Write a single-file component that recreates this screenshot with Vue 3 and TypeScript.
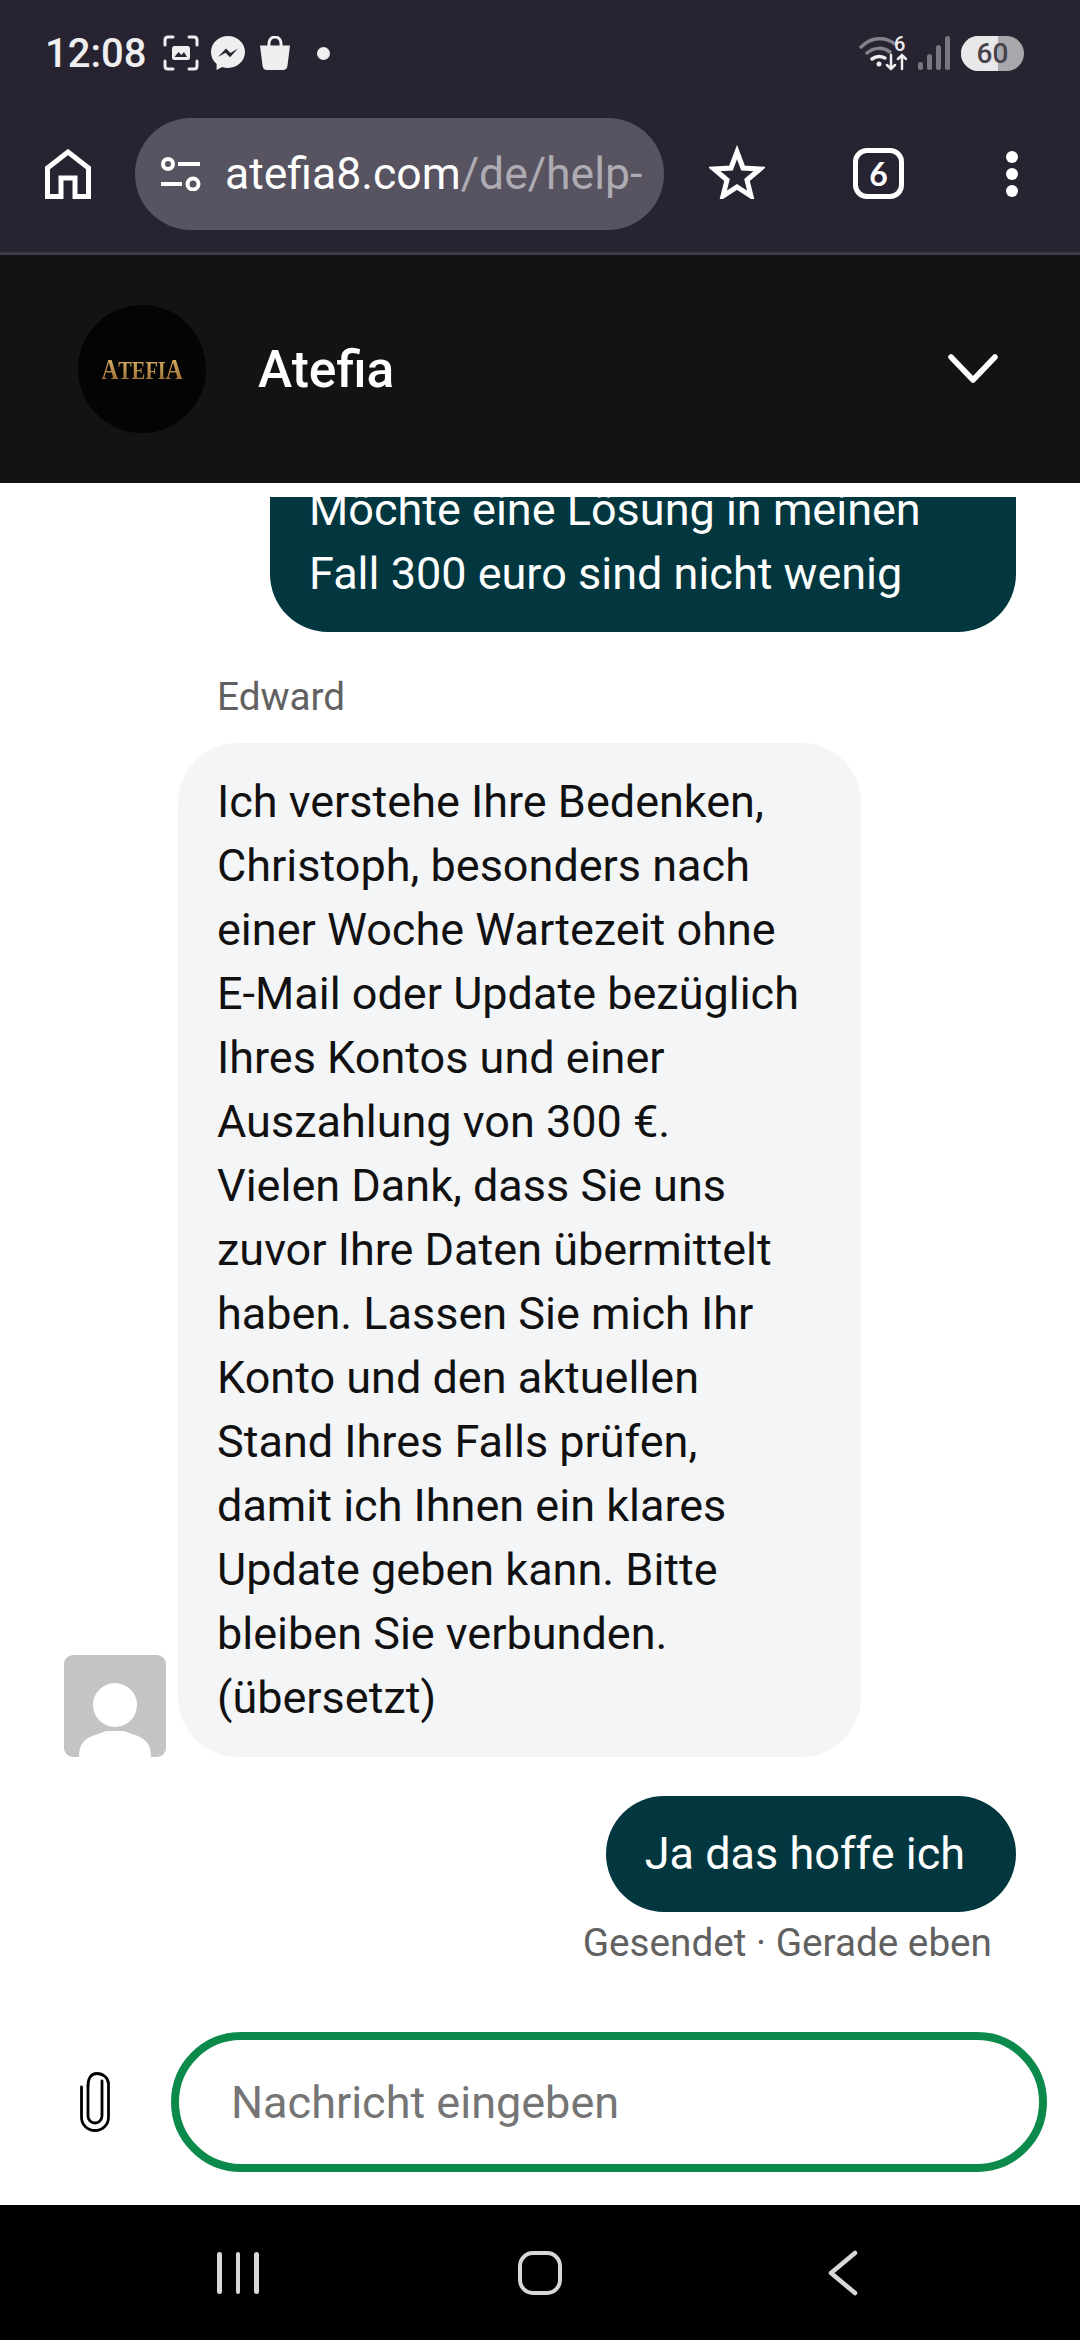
<template>
  <div class="phone">
    <div class="statusbar">
      <span class="time">12:08</span>
      <svg class="st-icon shot" viewBox="0 0 36 36" fill="none" stroke="#efeef0" stroke-width="3" stroke-linecap="round">
        <path d="M2 10V5q0-3 3-3h5M26 2h5q3 0 3 3v5M34 26v5q0 3-3 3h-5M10 34H5q-3 0-3-3v-5" />
        <rect x="9" y="11" width="18" height="14" rx="2.5" fill="#efeef0" stroke="none" />
        <path d="M11.5 22l4-5 3 3 2.5-3 3 5z" fill="#272330" stroke="none" />
      </svg>
      <svg class="st-icon messenger" viewBox="0 0 34 34">
        <path d="M17 0C7.600 0 0 7 0 16c0 5 2.100 9 5.600 12v6l5.500-3c1.800.6 3.800.9 5.900.9 9.400 0 17-7 17-15.900S26.400 0 17 0z" fill="#efeef0" />
        <path d="M7 21l8-8.500 4.400 4.400L27 12.500l-8 8.700-4.400-4.500z" fill="#272330" />
      </svg>
      <svg class="st-icon bag" viewBox="0 0 32 34">
        <path d="M10 11V7a6 6 0 0 1 12 0v4" fill="none" stroke="#efeef0" stroke-width="3" />
        <path d="M1 9.500h30l-2.500 20q-.5 4.500-4.500 4.500H8q-4 0-4.500-4.500z" fill="#efeef0" />
      </svg>
      <span class="st-dot"></span>
      <span class="spacer"></span>
      <svg class="wifi" viewBox="0 0 48 36" fill="none" stroke-linecap="round">
        <path d="M2 12C12 2 26 1 36 9" stroke="#85818b" stroke-width="3.500" />
        <path d="M8 18c7-6 16-6 23-1" stroke="#85818b" stroke-width="3.500" />
        <path d="M13 24c4-3 9-3 13-1" stroke="#efeef0" stroke-width="3.500" />
        <circle cx="20" cy="29" r="2.500" fill="#efeef0" />
        <path d="M32 20v14m-4-4 4 4 4-4M43 34V20m-4 4 4-4 4 4" stroke="#efeef0" stroke-width="2.500" />
      </svg>
      <span class="wifi-num">6</span>
      <svg class="signal" viewBox="0 0 32 34" fill="#7a7680">
        <rect x="0" y="26" width="5" height="8" rx="2.500" />
        <rect x="9" y="18" width="5" height="16" rx="2.500" />
        <rect x="18" y="9" width="5" height="25" rx="2.500" />
        <rect x="27" y="0" width="5" height="34" rx="2.500" />
      </svg>
      <span class="battery"><span class="battery-fill"></span><span class="battery-num">60</span></span>
    </div>

    <div class="toolbar">
      <svg class="home" viewBox="0 0 46 50" fill="none" stroke="#fff" stroke-width="5">
        <path d="M2.500 47.500V19L23 3l20.500 16v28.500H30V29H16v18.500z" />
      </svg>
      <div class="urlbar">
        <svg class="tune" viewBox="0 0 41 34" fill="none" stroke="#fff" stroke-width="4">
          <circle cx="8" cy="7" r="5" />
          <path d="M18 7h22M1 27h21" />
          <circle cx="33" cy="27" r="5.500" />
        </svg>
        <span class="url">atefia8.com<span class="url-path">/de/help-</span></span>
      </div>
      <svg class="star" viewBox="0 0 56 54" fill="none" stroke="#fff" stroke-width="5">
        <path d="M28 7l6 16 17 1-13 11 4 16-14-9-14 9 4-16L5 24l17-1z" />
      </svg>
      <div class="tabs">6</div>
      <div class="dots"><span></span><span></span><span></span></div>
    </div>

    <header class="chat-header">
      <div class="brand">
        <span class="brand-text"><b>A</b>TEFI<b>A</b></span>
      </div>
      <span class="chat-title">Atefia</span>
      <svg class="chevron" viewBox="0 0 50 30" fill="none" stroke="#fff" stroke-width="5.500" stroke-linecap="round" stroke-linejoin="round">
        <path d="M3 3l22 23L47 3" />
      </svg>
    </header>

    <main class="chat-wrap">
      <div class="chat">
        <div class="bubble mine first">Möchte eine Lösung in meinen<br />Fall 300 euro sind nicht wenig</div>
        <div class="agent-name">Edward</div>
        <div class="agent-row">
          <svg class="agent-avatar" viewBox="0 0 102 102">
            <rect width="102" height="102" rx="9" fill="#c4c4c4" />
            <circle cx="51" cy="50" r="22" fill="#fff" />
            <path d="M15 102c0-14 6-19 19-23l8-3h18l8 3c13 4 19 9 19 23z" fill="#fff" />
          </svg>
          <div class="bubble theirs">
            Ich verstehe Ihre Bedenken, Christoph, besonders nach einer Woche Wartezeit ohne E-Mail oder Update bezüglich Ihres Kontos und einer Auszahlung von 300 €.<br />
            Vielen Dank, dass Sie uns zuvor Ihre Daten übermittelt haben. Lassen Sie mich Ihr Konto und den aktuellen Stand Ihres Falls prüfen, damit ich Ihnen ein klares Update geben kann. Bitte bleiben Sie verbunden.<br />
            (übersetzt)
          </div>
        </div>
        <div class="bubble mine last">Ja das hoffe ich</div>
        <div class="meta">Gesendet · Gerade eben</div>
      </div>
    </main>

    <div class="composer">
      <svg class="clip" viewBox="0 0 30 60" fill="none" stroke="#000" stroke-width="2.800" stroke-linecap="round">
        <path d="M8 14v30a7 7 0 0 0 14 0V9" />
        <path d="M1.500 15v30c0 8 6 13.500 13.500 13.500S28.500 53 28.500 45V12C28.500 6 23 1.500 17 1.500S8 6 8 14" />
      </svg>
      <div class="input">Nachricht eingeben</div>
    </div>

    <nav class="navbar">
      <div class="nav-recent"><span></span><span></span><span></span></div>
      <div class="nav-home"></div>
      <svg class="nav-back" viewBox="0 0 30 46" fill="none" stroke="#d8d8d8" stroke-width="4.500" stroke-linecap="round" stroke-linejoin="round">
        <path d="M27 3L3 23l24 20" />
      </svg>
    </nav>
  </div>
</template>

<script setup lang="ts">
</script>

<style>
html,
body {
  margin: 0;
  background: #fff;
}
</style>

<style scoped>
.phone {
  width: 1080px;
  height: 2340px;
  display: flex;
  flex-direction: column;
  overflow: hidden;
  font-family: Roboto, "Noto Sans", sans-serif;
  background: #fff;
}

.statusbar {
  height: 106px;
  flex-shrink: 0;
  display: flex;
  align-items: center;
  padding: 0 56px 0 45px;
  background: #272330;
  color: #efeef0;
}

.time {
  font-size: 40px;
  font-weight: 500;
  width: 118px;
}

.st-icon {
  height: 34px;
  flex-shrink: 0;
}

.shot {
  width: 36px;
  height: 36px;
}

.messenger {
  width: 34px;
  margin-left: 12px;
}

.bag {
  width: 32px;
  margin-left: 14px;
}

.st-dot {
  width: 13px;
  height: 13px;
  border-radius: 50%;
  background: #efeef0;
  margin-left: 26px;
}

.spacer {
  flex: 1;
}

.wifi {
  width: 48px;
  height: 36px;
}

.wifi-num {
  font-size: 20px;
  font-weight: 500;
  margin: -18px 0 0 -13px;
  width: 12px;
}

.signal {
  width: 32px;
  height: 34px;
  margin-left: 12px;
}

.battery {
  position: relative;
  width: 63px;
  height: 35px;
  margin-left: 11px;
  border-radius: 18px;
  background: #a9a7ab;
  overflow: hidden;
}

.battery-fill {
  position: absolute;
  left: 0;
  top: 0;
  bottom: 0;
  width: 37px;
  background: #e8e7e9;
}

.battery-num {
  position: absolute;
  inset: 0;
  text-align: center;
  line-height: 35px;
  font-size: 28px;
  font-weight: 500;
  color: #46434c;
}

.toolbar {
  height: 149px;
  flex-shrink: 0;
  box-sizing: border-box;
  display: flex;
  align-items: flex-start;
  padding: 12px 0 0 45px;
  background: #272330;
  border-bottom: 3px solid #3d3948;
}

.home {
  width: 46px;
  height: 50px;
  margin-top: 31px;
}

.urlbar {
  width: 529px;
  height: 112px;
  margin-left: 44px;
  display: flex;
  align-items: center;
  box-sizing: border-box;
  padding: 0 24px 0 25px;
  border-radius: 56px;
  background: #575360;
  overflow: hidden;
}

.tune {
  width: 41px;
  height: 34px;
  flex-shrink: 0;
}

.url {
  margin-left: 24px;
  font-size: 44.5px;
  color: #fff;
  white-space: nowrap;
}

.url-path {
  color: #aeacb2;
}

.star {
  width: 56px;
  height: 54px;
  margin: 27px 0 0 45px;
}

.tabs {
  width: 51px;
  height: 51px;
  margin: 30px 0 0 88px;
  box-sizing: border-box;
  border: 5px solid #fff;
  border-radius: 14px;
  color: #fff;
  font-family: Lato, Roboto, sans-serif;
  font-size: 32px;
  font-weight: 700;
  line-height: 41px;
  text-align: center;
}

.dots {
  display: flex;
  flex-direction: column;
  gap: 5px;
  margin: 33px 0 0 102px;
}

.dots span {
  width: 12px;
  height: 12px;
  border-radius: 50%;
  background: #fff;
}

.chat-header {
  height: 228px;
  flex-shrink: 0;
  display: flex;
  align-items: center;
  padding: 0 82px 0 78px;
  background: #121411;
}

.brand {
  width: 128px;
  height: 128px;
  border-radius: 50%;
  background: #040404;
  display: flex;
  align-items: center;
  justify-content: center;
}

.brand-text {
  font-family: "Liberation Serif", serif;
  font-size: 26px;
  font-weight: 700;
  white-space: nowrap;
  transform: scaleX(0.78);
  background: linear-gradient(#eec274, #8c6128);
  -webkit-background-clip: text;
  background-clip: text;
  color: transparent;
}

.brand-text b {
  font-size: 30px;
}

.chat-title {
  flex: 1;
  margin-left: 52px;
  color: #fff;
  font-size: 51.500px;
  font-weight: 500;
}

.chevron {
  width: 50px;
  height: 30px;
}

.chat-wrap {
  flex: 1;
  min-height: 0;
  display: flex;
  padding-top: 14px;
}

.chat {
  flex: 1;
  min-height: 0;
  display: flex;
  flex-direction: column;
  justify-content: flex-end;
  overflow: hidden;
}

.bubble {
  flex-shrink: 0;
  box-sizing: border-box;
  font-size: 45px;
  line-height: 64px;
}

.mine {
  align-self: flex-end;
  margin-right: 64px;
  padding: 26px 39px;
  background: #023740;
  color: #fff;
  border-radius: 58px;
}

.first {
  width: 746px;
  border-top-left-radius: 0;
  border-top-right-radius: 0;
}

.last {
  margin-top: 39px;
  padding-right: 51px;
}

.agent-name {
  flex-shrink: 0;
  margin: 43px 0 24px 217px;
  font-size: 38.700px;
  line-height: 44px;
  color: #616161;
}

.agent-row {
  flex-shrink: 0;
  display: flex;
  align-items: flex-end;
  padding-left: 64px;
  gap: 12px;
}

.agent-avatar {
  width: 102px;
  height: 102px;
  flex-shrink: 0;
}

.theirs {
  width: 683px;
  padding: 27px 39px;
  background: #f4f5f7;
  color: #111;
  border-radius: 60px;
}

.meta {
  flex-shrink: 0;
  align-self: flex-end;
  margin: 9px 88px 0 0;
  font-size: 38.700px;
  line-height: 44px;
  color: #616161;
}

.composer {
  flex-shrink: 0;
  display: flex;
  align-items: center;
  padding: 67px 33px 33px 80px;
}

.clip {
  width: 30px;
  height: 60px;
  flex-shrink: 0;
}

.input {
  flex: 1;
  height: 140px;
  margin-left: 61px;
  box-sizing: border-box;
  display: flex;
  align-items: center;
  padding: 0 52px;
  border: 8px solid #0b8a4b;
  border-radius: 70px;
  font-size: 45px;
  color: #757575;
}

.navbar {
  height: 135px;
  flex-shrink: 0;
  display: flex;
  align-items: center;
  background: #000;
}

.nav-recent {
  display: flex;
  gap: 14px;
  margin-left: 217px;
}

.nav-recent span {
  width: 4.5px;
  height: 42px;
  border-radius: 3px;
  background: #d8d8d8;
}

.nav-home {
  width: 44px;
  height: 44px;
  margin-left: 259px;
  box-sizing: border-box;
  border: 4.500px solid #d8d8d8;
  border-radius: 15px;
}

.nav-back {
  width: 30px;
  height: 46px;
  margin-left: 266px;
}
</style>
